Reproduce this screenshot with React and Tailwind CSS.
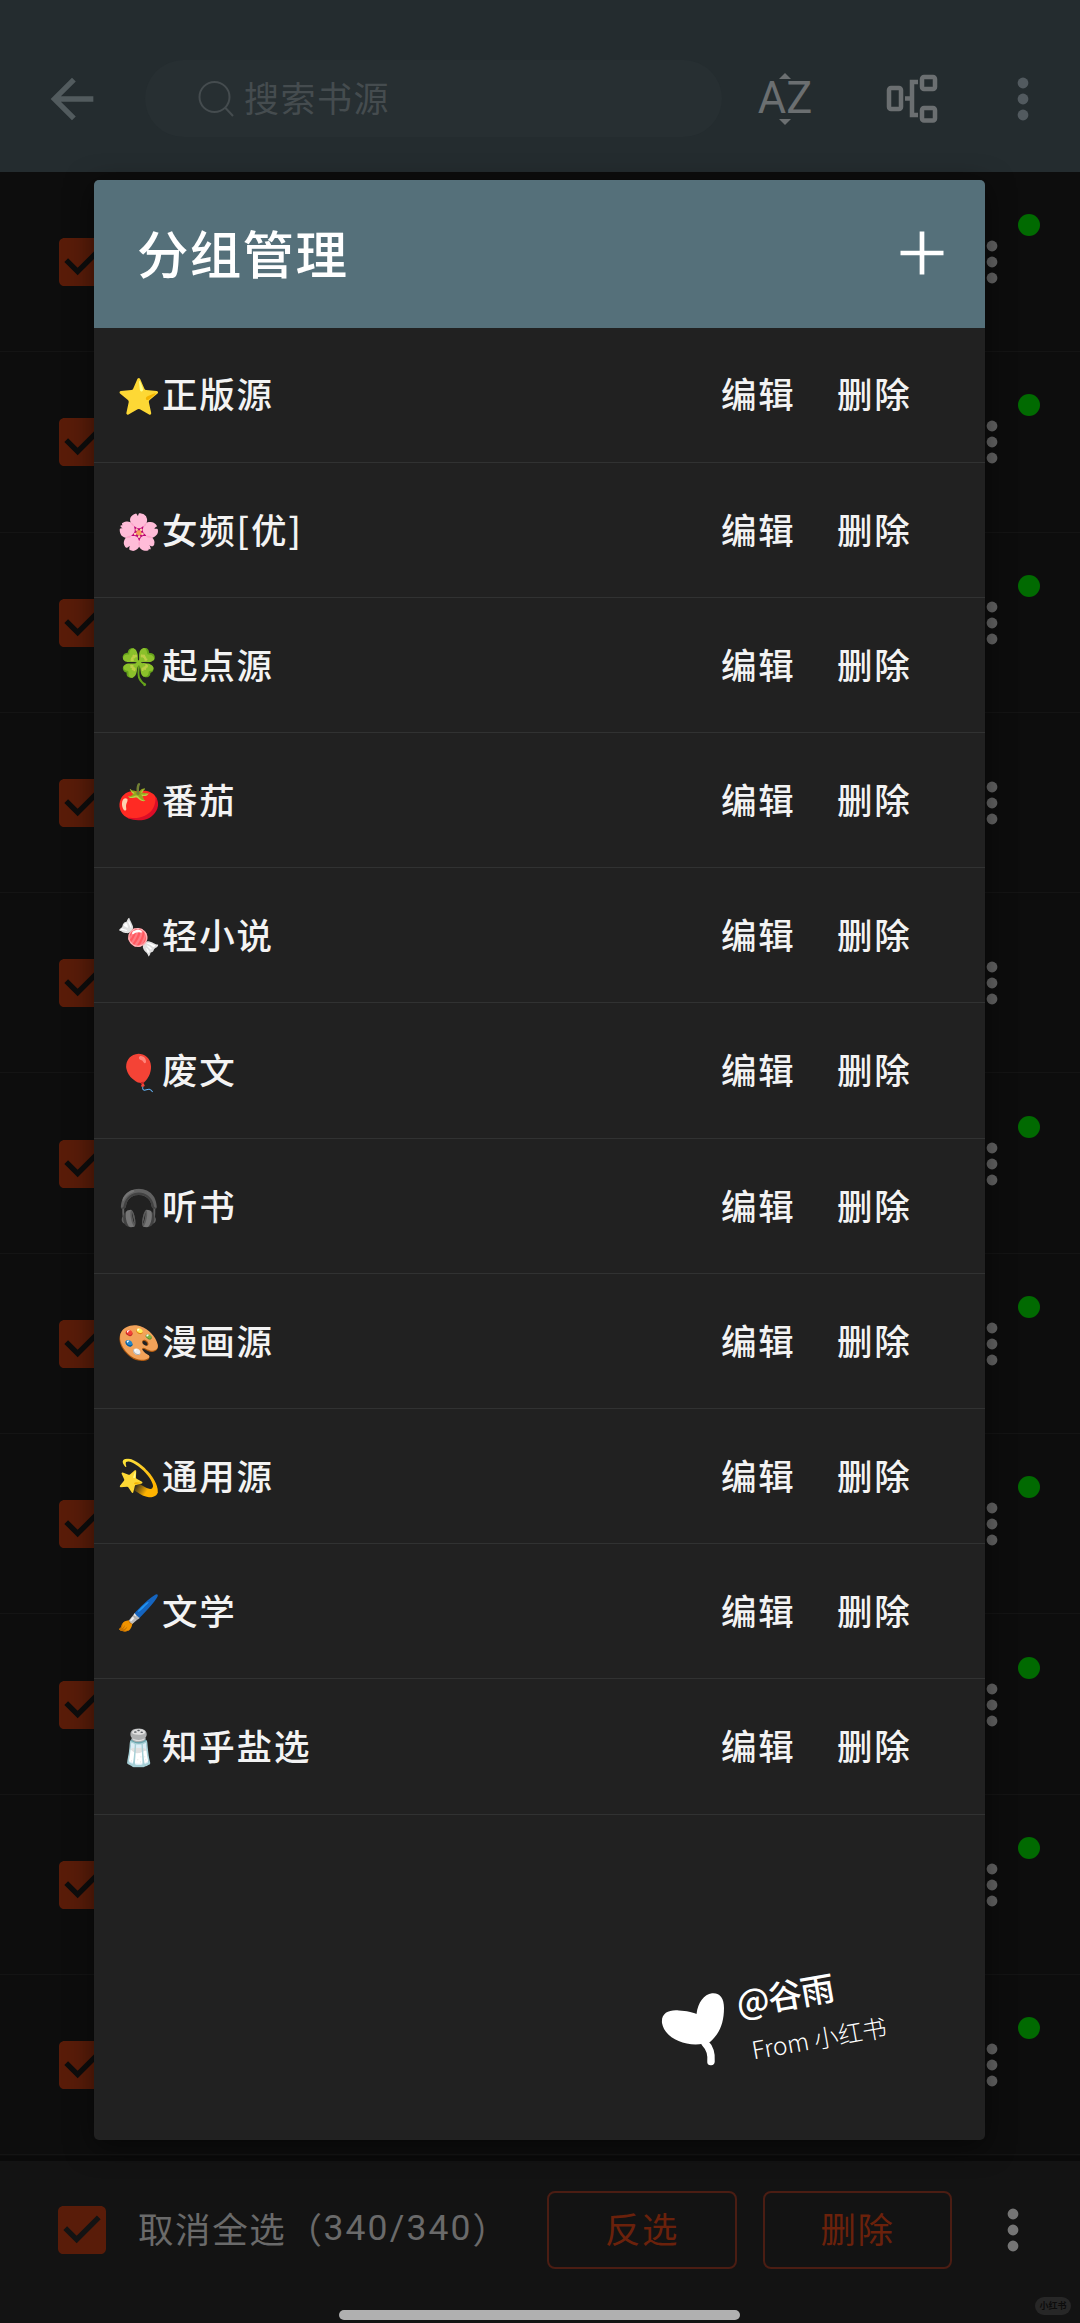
import React from 'react';

const groups = [
    { emoji: '⭐', name: '正版源' },
    { emoji: '🌸', name: '女频[优]' },
    { emoji: '🍀', name: '起点源' },
    { emoji: '🍅', name: '番茄' },
    { emoji: '🍬', name: '轻小说' },
    { emoji: '🎈', name: '废文' },
    { emoji: '🎧', name: '听书' },
    { emoji: '🎨', name: '漫画源' },
    { emoji: '💫', name: '通用源' },
    { emoji: '🖌️', name: '文学' },
    { emoji: '🧂', name: '知乎盐选' },
];

// true = the source has an explore page (green dot)
const sources = [true, true, true, false, false, true, true, true, true, true, true];

const Checkbox = () => (
    <svg viewBox="3 3 18 18" className="h-12 w-12 shrink-0 fill-[#591c09]">
        <path d="M19 3H5c-1.11 0-2 .9-2 2v14c0 1.1.89 2 2 2h14c1.11 0 2-.9 2-2V5c0-1.1-.89-2-2-2zm-9 14l-5-5 1.41-1.41L10 14.17l7.59-7.59L19 8l-9 9z" />
    </svg>
);

const MoreIcon = ({ className }) => (
    <svg viewBox="0 0 12 44" className={`h-11 w-3 shrink-0 ${className}`}>
        <circle cx="6" cy="6" r="5.4" />
        <circle cx="6" cy="22" r="5.4" />
        <circle cx="6" cy="38" r="5.4" />
    </svg>
);

const TopBar = () => (
    <header className="h-[172px] shrink-0 bg-[#242c2f] pt-[60px]">
        <div className="flex h-[77px] items-center">
            <svg viewBox="0 0 24 24" className="ml-10 h-16 w-16 shrink-0 fill-[#525b5e]">
                <path d="M20 11H7.83l5.59-5.59L12 4l-8 8 8 8 1.41-1.41L7.83 13H20v-2z" />
            </svg>
            <div className="ml-[41px] flex h-full w-[577px] shrink-0 items-center rounded-full bg-[#272f32] pl-[53px]">
                <svg viewBox="0 0 36 36" className="mr-[9px] h-9 w-9 fill-none stroke-[#454c4f] stroke-2">
                    <circle cx="16.500" cy="16" r="15" />
                    <path d="M27 26.500l8 8.500" />
                </svg>
                <span className="pb-[3px] pl-px text-[35px] tracking-[1.500px] text-[#454c4f]">搜索书源</span>
            </div>
            <div className="ml-9 flex h-[52px] w-[54px] shrink-0 flex-col items-center justify-between text-[#6b6f71]">
                <svg viewBox="0 0 12 6" className="h-1.5 w-3 fill-current">
                    <path d="M6 0l6 6H0z" />
                </svg>
                <span className="h-[31px] font-[Roboto] text-[43.5px] leading-[31px]">AZ</span>
                <svg viewBox="0 0 12 6" className="h-1.5 w-3 fill-current">
                    <path d="M6 6L0 0h12z" />
                </svg>
            </div>
            <svg viewBox="0 0 52 50" className="ml-[74px] h-[50px] w-[52px] shrink-0 fill-none stroke-[#6b6f71] stroke-[4.500]">
                <rect x="3" y="14" width="12" height="21" rx="2" />
                <rect x="36" y="3" width="13" height="12" rx="2" />
                <rect x="36" y="34" width="13" height="12.500" rx="2" />
                <path d="M32 8h-6v33h6M19 24.500h7" />
            </svg>
            <MoreIcon className="ml-[79px] fill-[#525a5f]" />
        </div>
    </header>
);

const SourceRow = ({ explore }) => (
    <div className="flex h-[180.3px] shrink-0 items-center border-b border-[#141414] pl-[58.5px] pt-px">
        <Checkbox />
        <MoreIcon className="ml-[879px] fill-[#636363]" />
        {explore && <span className="mb-[74px] ml-[20px] h-[22px] w-[22px] rounded-full bg-[#016a01]" />}
    </div>
);

const BottomBar = () => (
    <footer className="flex h-[167px] shrink-0 flex-col border-t-[5px] border-[#0a0a0a] bg-[#131313]">
        <div className="flex h-[137px] shrink-0 items-center pl-[58px] text-[35.5px]">
            <Checkbox />
            <div className="ml-[32px] flex w-[409px] shrink-0 pb-[3px] tracking-[1.600px] text-[#6a6a6a]">
                <span>取消全选（</span>
                <span className="pt-px font-[Roboto] tracking-[2.100px]">340/340</span>
                <span>）</span>
            </div>
            <button className="h-[78px] w-[190px] rounded-lg border-2 border-[#4b1d13] pb-[3px] tracking-[1.500px] text-[#6b210b]">反选</button>
            <button className="ml-[26px] h-[78px] w-[189px] rounded-lg border-2 border-[#4b1d13] pb-[3px] tracking-[1.500px] text-[#6b210b]">删除</button>
            <MoreIcon className="ml-[54.500px] fill-[#757575]" />
        </div>
        <div className="relative flex justify-center pr-0.5 pt-[12px]">
            <div className="h-2.5 w-[401px] rounded-full bg-[#b0b0b0]" />
            <span className="absolute right-[9px] -top-px flex h-[18px] w-9 items-center justify-center rounded-full bg-[#272727] text-[9px] font-bold text-[#0c0c0c]">
                小红书
            </span>
        </div>
    </footer>
);

const Watermark = () => (
    <div className="absolute left-[566px] top-[1811px] flex text-white">
        <svg viewBox="0 0 66 76" className="h-[76px] w-[66px] fill-white">
            <path d="M36.500 23C38 11 44 3.500 52 2.200C60 1.500 64 7 64 17C64 33 59 43 50 51C30 58 5 49 2 32C1 22 9 18.500 19 19.500C27 20 32 21 36.500 23z" />
            <path d="M45 52Q52 59 51 70.500" className="fill-none stroke-white stroke-[7.500]" strokeLinecap="round" />
        </svg>
        <div className="ml-[7px] mt-[-7px] origin-top-left -rotate-[10deg] whitespace-nowrap">
            <p className="text-[34px] font-medium leading-[38px] tracking-[-1px]">@谷雨</p>
            <p className="ml-[7px] mt-[14px] text-[24.500px] font-light leading-[32px]">From 小红书</p>
        </div>
    </div>
);

const GroupDialog = () => (
    <div className="absolute left-[94px] top-[180px] flex h-[1960px] w-[891px] flex-col overflow-hidden rounded-[5px] bg-[#212121] shadow-[0_6px_28px_rgba(0,0,0,0.5)]">
        <div className="flex h-[147.5px] shrink-0 items-center justify-between bg-[#55707a] pl-[43px] pr-[41px]">
            <h1 className="pb-[5px] text-[51.500px] font-medium leading-none tracking-[1.300px] text-white">分组管理</h1>
            <svg viewBox="0 0 44 44" className="mb-px h-11 w-11 fill-none stroke-white stroke-[4.700]">
                <path d="M22 0.500v43M0.500 22h43" />
            </svg>
        </div>
        {groups.map((group) => (
            <div
                key={group.name}
                className="flex h-[135.2px] shrink-0 items-center border-b border-[#313232] pb-[3px] pl-[23px] text-[35.500px] font-medium tracking-[1.800px] text-[#f3f3f3]"
            >
                <span className="w-[45px] whitespace-nowrap text-[35px] leading-none">{group.emoji}</span>
                <span className="grow">{group.name}</span>
                <span className="w-[116px]">编辑</span>
                <span className="w-[148px]">删除</span>
            </div>
        ))}
        <Watermark />
    </div>
);

const App = () => {
    return (
        <div className="relative flex h-[2323px] w-[1080px] flex-col overflow-hidden bg-[#0d0d0d] font-['Noto_Sans_CJK_SC','Noto_Color_Emoji',sans-serif]">
            <TopBar />
            <main className="flex h-[1984px] shrink-0 flex-col overflow-hidden">
                {sources.map((explore, i) => (
                    <SourceRow key={i} explore={explore} />
                ))}
            </main>
            <BottomBar />
            <GroupDialog />
        </div>
    );
};

export default App;
